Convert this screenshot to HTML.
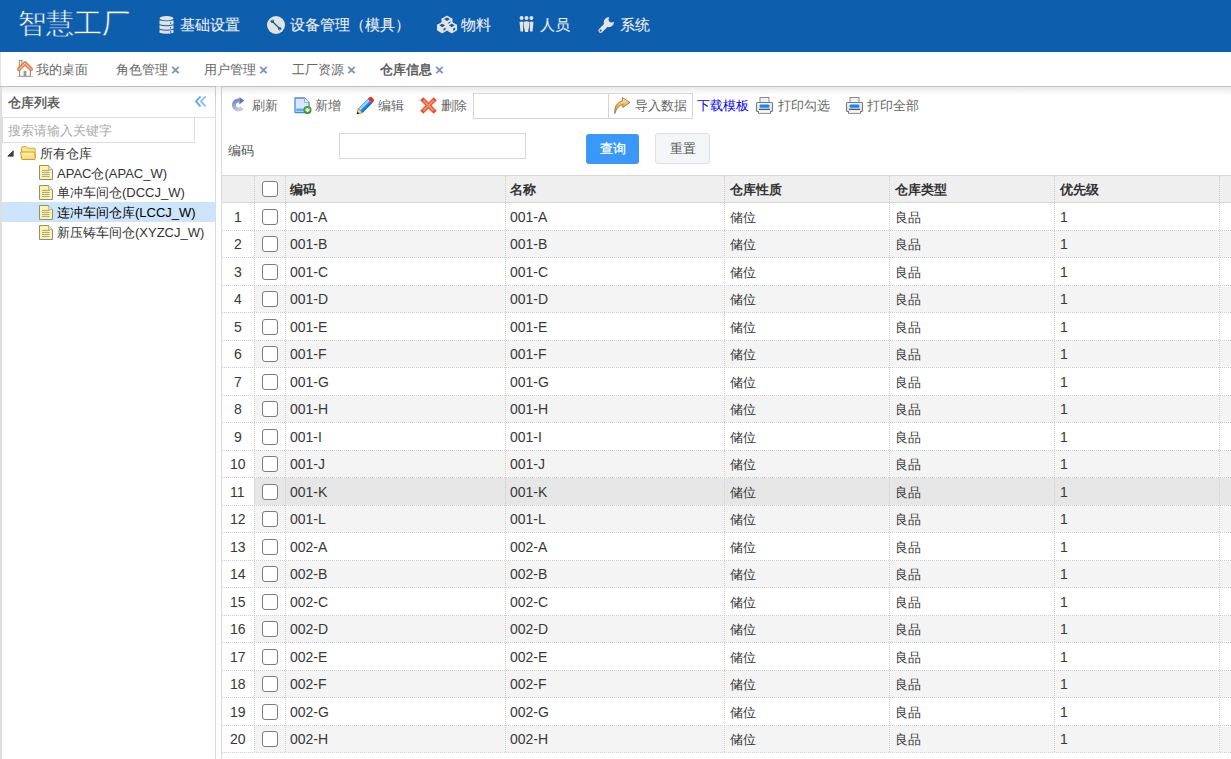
<!DOCTYPE html>
<html><head><meta charset="utf-8">
<style>
*{box-sizing:border-box;margin:0;padding:0}
html,body{width:1231px;height:759px;overflow:hidden;background:#fff}
body{font-family:"Liberation Sans",sans-serif;font-size:13px;color:#333;position:relative}
.abs{position:absolute}
svg.abs{overflow:visible}
.hdr{position:absolute;left:0;top:0;width:1231px;height:52px;background:#0e5eae}
.title{position:absolute;left:18px;top:4px;font-size:28px;color:#fff;white-space:nowrap;line-height:40px;-webkit-text-stroke:0.45px #0e5eae}
.mi{position:absolute;top:12px;height:26px;line-height:26px;font-size:15px;color:#f0eef0;white-space:nowrap;-webkit-text-stroke:0.1px #f0eef0}
.tab{position:absolute;top:61px;line-height:18px;font-size:13px;color:#666;white-space:nowrap}
.x{position:absolute;top:60.5px;line-height:18px;font-size:15px;font-weight:bold;color:#7791c4}
.cell{position:absolute;white-space:nowrap;line-height:18px}
.n{font-size:14px;color:#383838}
.cb{position:absolute;width:15.5px;height:15.5px;border:1.4px solid #7c7c7c;border-radius:3px;background:#fff}
</style></head><body>

<div class="hdr">
<div class="title">智慧工厂</div>
<div class="mi" style="left:180px">基础设置</div>
<div class="mi" style="left:290px">设备管理（模具）</div>
<div class="mi" style="left:461px">物料</div>
<div class="mi" style="left:540px">人员</div>
<div class="mi" style="left:620px">系统</div>
<svg class="abs" style="left:158.5px;top:16px" width="15" height="18" viewBox="0 0 15 18"><ellipse cx="7.5" cy="2.2" rx="7" ry="2.2" fill="#e6e3df"/><path d="M0.5,4.3 Q7.5,6.3 14.5,4.3 V8.3 Q7.5,10.3 0.5,8.3 Z" fill="#e6e3df"/><circle cx="11.6" cy="7.00" r="0.75" fill="#0e5eae"/><path d="M0.5,9.3 Q7.5,11.3 14.5,9.3 V12.8 Q7.5,14.8 0.5,12.8 Z" fill="#e6e3df"/><circle cx="11.6" cy="11.75" r="0.75" fill="#0e5eae"/><path d="M0.5,13.8 Q7.5,15.8 14.5,13.8 V16.8 Q7.5,18.8 0.5,16.8 Z" fill="#e6e3df"/><circle cx="11.6" cy="16.00" r="0.75" fill="#0e5eae"/></svg>
<svg class="abs" style="left:267px;top:16px" width="18" height="18" viewBox="0 0 18 18"><circle cx="9" cy="9" r="9" fill="#e6e3df"/><path d="M6,6 L12,12" stroke="#0e5eae" stroke-width="1.3" stroke-linecap="round"/><circle cx="5.3" cy="5.3" r="1.7" fill="#0e5eae"/><circle cx="12.7" cy="12.7" r="1.7" fill="#0e5eae"/><path d="M3.9,3.1 L5.3,4.6" stroke="#e6e3df" stroke-width="1"/><path d="M14.1,14.9 L12.7,13.4" stroke="#e6e3df" stroke-width="1"/></svg>
<svg class="abs" style="left:437px;top:16px" width="20" height="17" viewBox="0 0 20 17"><path d="M5.2,3.0 L10,5.640000000000001 L14.8,3.0 L14.8,8.04 L10,10.68 L5.2,8.04 Z" fill="#e6e3df" stroke="#e6e3df" stroke-width="1.3" stroke-linejoin="round"/><path d="M5.2,3.0 L10,0.3599999999999999 L14.8,3.0 L10,5.640000000000001 Z" fill="#e6e3df" stroke="#e6e3df" stroke-width="1.3" stroke-linejoin="round"/><path d="M7.024,3.1 L10,1.416 L12.975999999999999,3.1 L10,5.016 Z" fill="#0e5eae"/><path d="M11.44,6.4559999999999995 L13.456,5.304 L13.456,7.8 L11.44,9.0 Z" fill="#0e5eae"/><path d="M0.6000000000000005,9.2 L5.2,11.729999999999999 L9.8,9.2 L9.8,14.03 L5.2,16.56 L0.6000000000000005,14.03 Z" fill="#e6e3df" stroke="#e6e3df" stroke-width="1.3" stroke-linejoin="round"/><path d="M0.6000000000000005,9.2 L5.2,6.67 L9.8,9.2 L5.2,11.729999999999999 Z" fill="#e6e3df" stroke="#e6e3df" stroke-width="1.3" stroke-linejoin="round"/><path d="M2.3480000000000003,9.299999999999999 L5.2,7.6819999999999995 L8.052,9.299999999999999 L5.2,11.132 Z" fill="#0e5eae"/><path d="M6.58,12.511999999999999 L8.512,11.408 L8.512,13.799999999999999 L6.58,14.95 Z" fill="#0e5eae"/><path d="M10.200000000000001,9.2 L14.8,11.729999999999999 L19.4,9.2 L19.4,14.03 L14.8,16.56 L10.200000000000001,14.03 Z" fill="#e6e3df" stroke="#e6e3df" stroke-width="1.3" stroke-linejoin="round"/><path d="M10.200000000000001,9.2 L14.8,6.67 L19.4,9.2 L14.8,11.729999999999999 Z" fill="#e6e3df" stroke="#e6e3df" stroke-width="1.3" stroke-linejoin="round"/><path d="M11.948,9.299999999999999 L14.8,7.6819999999999995 L17.652,9.299999999999999 L14.8,11.132 Z" fill="#0e5eae"/><path d="M16.18,12.511999999999999 L18.112000000000002,11.408 L18.112000000000002,13.799999999999999 L16.18,14.95 Z" fill="#0e5eae"/></svg>
<svg class="abs" style="left:518.5px;top:16px" width="15" height="16" viewBox="0 0 15 16"><circle cx="2.6" cy="2" r="2" fill="#e6e3df"/><circle cx="7.5" cy="2" r="2" fill="#e6e3df"/><circle cx="12.4" cy="2" r="2" fill="#e6e3df"/><path d="M0.5,6 Q2.5,5 4.6,6 L4.2,11 L4,15.5 L1.5,15.5 L1,11 Z" fill="#e6e3df"/><path d="M10.4,6 Q12.5,5 14.5,6 L14,11 L13.5,15.5 L11,15.5 L10.8,11 Z" fill="#e6e3df"/><path d="M5,5.7 Q7.5,4.8 10,5.7 L10,11 L9,16 L6,16 L5,11 Z" fill="#e6e3df"/></svg>
<svg class="abs" style="left:597.5px;top:16px" width="17" height="18" viewBox="0 0 17 18"><path d="M2.6,14.6 L8.8,8.4" stroke="#e6e3df" stroke-width="4.4" stroke-linecap="round"/><circle cx="10.8" cy="6.3" r="5" fill="#e6e3df"/><circle cx="13.6" cy="3.4" r="3" fill="#0e5eae"/><path d="M12.6,2.4 L17,-2 L18,4.5 Z" fill="#0e5eae"/><circle cx="2.6" cy="14.6" r="1.1" fill="#0e5eae"/></svg>
</div>
<svg class="abs" style="left:17px;top:60px" width="16" height="17" viewBox="0 0 16 17"><rect x="2.3" y="0.5" width="2.6" height="6" fill="#fff" stroke="#8a8a8a" stroke-width="1"/><path d="M2.6,8 L2.6,16.2 L13.4,16.2 L13.4,8" fill="#fff" stroke="#8a8a8a" stroke-width="1.1"/><rect x="6.6" y="11" width="2.8" height="5.2" fill="#9a9a9a"/><path d="M0,16.6 H16" stroke="#aaa" stroke-width="0.8"/><path d="M2,9.2 L8,3.1 L14,9.2" fill="none" stroke="#e47d45" stroke-width="4" stroke-linejoin="round" stroke-linecap="round"/><path d="M2,9.2 L8,3.1 L14,9.2" fill="none" stroke="#f7b993" stroke-width="1.3" stroke-linejoin="round" stroke-linecap="round"/></svg>
<div class="tab" style="left:36px">我的桌面</div>
<div class="tab" style="left:116px">角色管理</div>
<div class="x" style="left:171px">×</div>
<div class="tab" style="left:204px">用户管理</div>
<div class="x" style="left:259px">×</div>
<div class="tab" style="left:292px">工厂资源</div>
<div class="x" style="left:347px">×</div>
<div class="tab" style="left:380px;color:#555;-webkit-text-stroke:0.45px #555">仓库信息</div>
<div class="x" style="left:435px">×</div>
<div class="abs" style="left:0;top:86px;width:216px;height:1px;background:#bfbfbf"></div>
<div class="abs" style="left:216px;top:86px;width:5px;height:1px;background:#dadada"></div>
<div class="abs" style="left:221px;top:86px;width:1010px;height:1px;background:#bfbfbf"></div>
<div class="abs" style="left:0;top:52px;width:1px;height:34px;background:#e2e2e2"></div>
<div class="abs" style="left:0;top:87px;width:2px;height:672px;background:#dedede"></div>
<div class="abs" style="left:2px;top:87px;width:213px;height:8px;background:linear-gradient(#ededed,#fff)"></div>
<div class="abs" style="left:215px;top:87px;width:1px;height:672px;background:linear-gradient(#c8c8c8,#dcdcdc 30px)"></div>
<div class="abs" style="left:216px;top:87px;width:5px;height:8px;background:linear-gradient(#f0f0f0,#fafafa)"></div>
<div class="abs" style="left:2px;top:117px;width:213px;height:1px;background:#e0e0e0"></div>
<div class="cell" style="left:8px;top:94px;color:#555;-webkit-text-stroke:0.4px #555">仓库列表</div>
<svg class="abs" style="left:194.5px;top:96px" width="11" height="11" viewBox="0 0 11 11"><path d="M5,1 L1,5.4 L5,9.8" fill="none" stroke="#55a6ec" stroke-width="1.8" stroke-linecap="round" stroke-linejoin="round"/><path d="M10,1 L6,5.4 L10,9.8" fill="none" stroke="#7cc0f4" stroke-width="1.8" stroke-linecap="round" stroke-linejoin="round"/></svg>
<div class="abs" style="left:2px;top:117px;width:193px;height:26px;border:1px solid #ddd;background:#fff"></div>
<div class="cell" style="left:8px;top:122px;color:#aaa">搜索请输入关键字</div>
<div class="abs" style="left:2px;top:202px;width:213px;height:20px;background:#cde5fb"></div>
<svg class="abs" style="left:6.5px;top:149.5px" width="7" height="7" viewBox="0 0 7 7"><path d="M0.8,6.2 L6.2,0.8 L6.2,6.2 Z" fill="#444" stroke="#333" stroke-width="0.8" stroke-linejoin="round"/></svg>
<svg class="abs" style="left:20px;top:146px" width="16" height="14" viewBox="0 0 16 14"><defs><linearGradient id="fg" x1="0" y1="0" x2="0" y2="1"><stop offset="0" stop-color="#fdf3a8"/><stop offset="1" stop-color="#f3d870"/></linearGradient></defs><path d="M1.5,12.5 V2.2 Q1.5,0.6 3.1,0.6 H6.3 L7.8,2.2 H14 Q15.2,2.2 15.2,3.4 V12.5 Z" fill="#f7e490" stroke="#d4a63c" stroke-width="1"/><path d="M0.6,6 H13.2 Q14.4,6 14.7,7 L15.4,12.6 Q15.5,13.5 14.5,13.5 H2.4 Q1.6,13.5 1.5,12.7 Z" fill="url(#fg)" stroke="#cf9a2a" stroke-width="1" stroke-linejoin="round"/></svg>
<div class="cell" style="left:40px;top:145px;color:#333">所有仓库</div>
<div class="cell" style="left:57px;top:164.5px;color:#333">APAC仓(APAC_W)</div>
<svg class="abs" style="left:39px;top:165px" width="14" height="15" viewBox="0 0 14 15"><path d="M0.5,0.5 L9.5,0.5 L13.5,4.5 L13.5,14.5 L0.5,14.5 Z" fill="#fcf6a2" stroke="#8c8c8c" stroke-width="1"/><path d="M9.5,0.5 L9.5,4.5 L13.5,4.5" fill="#f0e8c8" stroke="#aaa" stroke-width="0.8"/><path d="M3,5.5 H10.5" stroke="#9a9a8a" stroke-width="0.9"/><path d="M3,7.5 H10.5" stroke="#9a9a8a" stroke-width="0.9"/><path d="M3,9.5 H10.5" stroke="#9a9a8a" stroke-width="0.9"/><path d="M3,11.5 H10.5" stroke="#9a9a8a" stroke-width="0.9"/><path d="M5.5,4 V12.5 M8,4 V12.5" stroke="#d8d0a0" stroke-width="0.6"/></svg>
<div class="cell" style="left:57px;top:184px;color:#333">单冲车间仓(DCCJ_W)</div>
<svg class="abs" style="left:39px;top:185px" width="14" height="15" viewBox="0 0 14 15"><path d="M0.5,0.5 L9.5,0.5 L13.5,4.5 L13.5,14.5 L0.5,14.5 Z" fill="#fcf6a2" stroke="#8c8c8c" stroke-width="1"/><path d="M9.5,0.5 L9.5,4.5 L13.5,4.5" fill="#f0e8c8" stroke="#aaa" stroke-width="0.8"/><path d="M3,5.5 H10.5" stroke="#9a9a8a" stroke-width="0.9"/><path d="M3,7.5 H10.5" stroke="#9a9a8a" stroke-width="0.9"/><path d="M3,9.5 H10.5" stroke="#9a9a8a" stroke-width="0.9"/><path d="M3,11.5 H10.5" stroke="#9a9a8a" stroke-width="0.9"/><path d="M5.5,4 V12.5 M8,4 V12.5" stroke="#d8d0a0" stroke-width="0.6"/></svg>
<div class="cell" style="left:57px;top:204px;color:#000">连冲车间仓库(LCCJ_W)</div>
<svg class="abs" style="left:39px;top:205px" width="14" height="15" viewBox="0 0 14 15"><path d="M0.5,0.5 L9.5,0.5 L13.5,4.5 L13.5,14.5 L0.5,14.5 Z" fill="#fcf6a2" stroke="#8c8c8c" stroke-width="1"/><path d="M9.5,0.5 L9.5,4.5 L13.5,4.5" fill="#f0e8c8" stroke="#aaa" stroke-width="0.8"/><path d="M3,5.5 H10.5" stroke="#9a9a8a" stroke-width="0.9"/><path d="M3,7.5 H10.5" stroke="#9a9a8a" stroke-width="0.9"/><path d="M3,9.5 H10.5" stroke="#9a9a8a" stroke-width="0.9"/><path d="M3,11.5 H10.5" stroke="#9a9a8a" stroke-width="0.9"/><path d="M5.5,4 V12.5 M8,4 V12.5" stroke="#d8d0a0" stroke-width="0.6"/></svg>
<div class="cell" style="left:57px;top:224px;color:#333">新压铸车间仓(XYZCJ_W)</div>
<svg class="abs" style="left:39px;top:225px" width="14" height="15" viewBox="0 0 14 15"><path d="M0.5,0.5 L9.5,0.5 L13.5,4.5 L13.5,14.5 L0.5,14.5 Z" fill="#fcf6a2" stroke="#8c8c8c" stroke-width="1"/><path d="M9.5,0.5 L9.5,4.5 L13.5,4.5" fill="#f0e8c8" stroke="#aaa" stroke-width="0.8"/><path d="M3,5.5 H10.5" stroke="#9a9a8a" stroke-width="0.9"/><path d="M3,7.5 H10.5" stroke="#9a9a8a" stroke-width="0.9"/><path d="M3,9.5 H10.5" stroke="#9a9a8a" stroke-width="0.9"/><path d="M3,11.5 H10.5" stroke="#9a9a8a" stroke-width="0.9"/><path d="M5.5,4 V12.5 M8,4 V12.5" stroke="#d8d0a0" stroke-width="0.6"/></svg>
<div class="abs" style="left:221px;top:87px;width:1px;height:672px;background:linear-gradient(#c8c8c8,#dcdcdc 30px)"></div>
<div class="abs" style="left:222px;top:87px;width:1009px;height:8px;background:linear-gradient(#e9e9e9,#fff)"></div>
<svg class="abs" style="left:232px;top:97px" width="13" height="15" viewBox="0 0 13 15"><defs><linearGradient id="rg" x1="0" y1="0" x2="0.4" y2="1"><stop offset="0" stop-color="#5270c2"/><stop offset="0.5" stop-color="#93a6d8"/><stop offset="1" stop-color="#c9ccd3"/></linearGradient></defs><path d="M7.63,1.6 A6.5,6.5 0 1 0 11.48,12.18 L8.49,9.67 A2.6,2.6 0 1 1 6.95,5.44 Z" fill="url(#rg)"/><path d="M7.4,0.2 L12.4,3.6 L7.3,7.4 Z" fill="#5574c6"/></svg>
<svg class="abs" style="left:294px;top:97px" width="18" height="17" viewBox="0 0 18 17"><path d="M1,1 L10.5,1 L15,5.5 L15,15.5 L1,15.5 Z" fill="#d9e8fb" stroke="#4d8ad6" stroke-width="1.3" stroke-linejoin="round"/><path d="M10.5,1 L10.5,5.5 L15,5.5" fill="#f4f8fe" stroke="#7aa6e0" stroke-width="0.8"/><rect x="2.3" y="11.5" width="10" height="2.6" fill="#58b4f6"/><circle cx="13.5" cy="13" r="4" fill="#3f8f2a"/><circle cx="13.5" cy="12.6" r="2.9" fill="#6cb04a"/><path d="M11.5,13 H15.5 M13.5,11 V15" stroke="#fff" stroke-width="1.5"/></svg>
<svg class="abs" style="left:356px;top:96.5px" width="19" height="18" viewBox="0 0 19 18"><g transform="translate(9.3 8.7) rotate(-45)"><rect x="-7" y="-3" width="13.5" height="6" fill="#1b8df2"/><rect x="-7" y="-2.4" width="13.5" height="2.1" fill="#a8dafc"/><rect x="-7" y="1.5" width="13.5" height="1.5" fill="#156ed2"/><path d="M6.5,-3 L8.5,-3 Q10.5,-3 10.5,-1 L10.5,1 Q10.5,3 8.5,3 L6.5,3 Z" fill="#e4321b"/><path d="M-7,-3 L-11.5,0 L-7,3 Z" fill="#f5dca6" stroke="#a8781e" stroke-width="0.8" stroke-linejoin="round"/><path d="M-9.8,-1.3 L-12,0 L-9.8,1.3 Z" fill="#0d0d1a"/></g></svg>
<svg class="abs" style="left:421px;top:98px" width="15" height="15" viewBox="0 0 15 15"><path d="M2.3,2.3 L12.7,12.7 M12.7,2.3 L2.3,12.7" stroke="#e9502f" stroke-width="4.4" stroke-linecap="square"/><path d="M2.3,2.3 L12.7,12.7 M12.7,2.3 L2.3,12.7" stroke="#f6896a" stroke-width="2"/></svg>
<svg class="abs" style="left:614px;top:97px" width="17" height="17" viewBox="0 0 17 17"><defs><linearGradient id="ag" x1="0" y1="0" x2="0" y2="1"><stop offset="0" stop-color="#fde9b8"/><stop offset="0.6" stop-color="#f9a81c"/><stop offset="1" stop-color="#f0b530"/></linearGradient></defs><path d="M0.8,16.5 C0.2,10 3,5.3 8.3,3.8 L8.5,0.6 L16,5.5 L8.8,10.4 L8.7,7.5 C5.5,8.2 2.8,11 0.8,16.5 Z" fill="url(#ag)" stroke="#7d6a56" stroke-width="0.8" stroke-linejoin="round"/></svg>
<svg class="abs" style="left:756px;top:97px" width="17" height="17" viewBox="0 0 17 17"><defs><linearGradient id="pg" x1="0" y1="0" x2="0" y2="1"><stop offset="0" stop-color="#f4f4f6"/><stop offset="1" stop-color="#d6d8de"/></linearGradient></defs><rect x="4" y="0.5" width="9" height="7" fill="#eef2f8" stroke="#8a8a8a" stroke-width="1"/><path d="M1.5,5.5 H15.5 Q16.5,5.5 16.5,6.5 V13.5 Q16.5,14.5 15.5,14.5 H14.5 V16.3 H2.5 V14.5 H1.5 Q0.5,14.5 0.5,13.5 V6.5 Q0.5,5.5 1.5,5.5 Z" fill="url(#pg)" stroke="#7a7a7a" stroke-width="1.1" stroke-linejoin="round"/><rect x="3.6" y="7.6" width="9.8" height="3.2" rx="1.2" fill="#1287fb"/><path d="M3,12.4 H14" stroke="#555" stroke-width="1.3"/><rect x="3" y="13.2" width="11" height="2.6" fill="#f6f6f8"/></svg>
<svg class="abs" style="left:846px;top:97px" width="17" height="17" viewBox="0 0 17 17"><defs><linearGradient id="pg" x1="0" y1="0" x2="0" y2="1"><stop offset="0" stop-color="#f4f4f6"/><stop offset="1" stop-color="#d6d8de"/></linearGradient></defs><rect x="4" y="0.5" width="9" height="7" fill="#eef2f8" stroke="#8a8a8a" stroke-width="1"/><path d="M1.5,5.5 H15.5 Q16.5,5.5 16.5,6.5 V13.5 Q16.5,14.5 15.5,14.5 H14.5 V16.3 H2.5 V14.5 H1.5 Q0.5,14.5 0.5,13.5 V6.5 Q0.5,5.5 1.5,5.5 Z" fill="url(#pg)" stroke="#7a7a7a" stroke-width="1.1" stroke-linejoin="round"/><rect x="3.6" y="7.6" width="9.8" height="3.2" rx="1.2" fill="#1287fb"/><path d="M3,12.4 H14" stroke="#555" stroke-width="1.3"/><rect x="3" y="13.2" width="11" height="2.6" fill="#f6f6f8"/></svg>
<div class="cell" style="left:252px;top:97px;color:#666">刷新</div>
<div class="cell" style="left:315px;top:97px;color:#666">新增</div>
<div class="cell" style="left:378px;top:97px;color:#666">编辑</div>
<div class="cell" style="left:441px;top:97px;color:#666">删除</div>
<div class="cell" style="left:635px;top:97px;color:#666">导入数据</div>
<div class="cell" style="left:778px;top:97px;color:#666">打印勾选</div>
<div class="cell" style="left:867px;top:97px;color:#666">打印全部</div>
<div class="cell" style="left:697px;top:97px;color:#0000ee">下载模板</div>
<div class="abs" style="left:473px;top:93px;width:220px;height:26px;border:1px solid #d5d5d5"></div>
<div class="abs" style="left:608px;top:93px;width:1px;height:26px;background:#d5d5d5"></div>
<div class="cell" style="left:228px;top:142px;color:#555">编码</div>
<div class="abs" style="left:339px;top:133px;width:187px;height:26px;border:1px solid #d8d8d8"></div>
<div class="abs" style="left:586px;top:134px;width:53px;height:30px;background:#3a98f9;border-radius:3px;color:#fff;text-align:center;line-height:30px;-webkit-text-stroke:0.3px #fff">查询</div>
<div class="abs" style="left:655px;top:133px;width:55px;height:31px;background:#f4f5f7;border:1px solid #dcdfe6;border-radius:3px;color:#555;text-align:center;line-height:29px">重置</div>
<div class="abs" style="left:222px;top:175px;width:1009px;height:28px;background:#efefef;border-top:1px solid #d6d6d6;border-bottom:1px solid #d6d6d6"></div>
<div class="cell" style="left:290px;top:181px;font-weight:bold;color:#333">编码</div>
<div class="cell" style="left:510px;top:181px;font-weight:bold;color:#333">名称</div>
<div class="cell" style="left:730px;top:181px;font-weight:bold;color:#333">仓库性质</div>
<div class="cell" style="left:895px;top:181px;font-weight:bold;color:#333">仓库类型</div>
<div class="cell" style="left:1060px;top:181px;font-weight:bold;color:#333">优先级</div>
<div class="cb" style="left:262px;top:181px"></div>
<div class="abs" style="left:254px;top:203px;width:977px;height:27px;background:#fff"></div>
<div class="abs" style="left:222px;top:230px;width:1009px;height:1px;border-top:1px dotted #cdcdcd"></div>
<div class="cell n" style="left:234px;top:207.5px">1</div>
<div class="cb" style="left:262px;top:209px"></div>
<div class="cell n" style="left:290px;top:207.5px">001-A</div>
<div class="cell n" style="left:510px;top:207.5px">001-A</div>
<div class="cell" style="left:730px;top:208.5px">储位</div>
<div class="cell" style="left:895px;top:208.5px">良品</div>
<div class="cell n" style="left:1060px;top:207.5px">1</div>
<div class="abs" style="left:254px;top:231px;width:977px;height:26px;background:#f4f4f4"></div>
<div class="abs" style="left:222px;top:257px;width:1009px;height:1px;border-top:1px dotted #cdcdcd"></div>
<div class="cell n" style="left:234px;top:235.0px">2</div>
<div class="cb" style="left:262px;top:236px"></div>
<div class="cell n" style="left:290px;top:235.0px">001-B</div>
<div class="cell n" style="left:510px;top:235.0px">001-B</div>
<div class="cell" style="left:730px;top:236.0px">储位</div>
<div class="cell" style="left:895px;top:236.0px">良品</div>
<div class="cell n" style="left:1060px;top:235.0px">1</div>
<div class="abs" style="left:254px;top:258px;width:977px;height:27px;background:#fff"></div>
<div class="abs" style="left:222px;top:285px;width:1009px;height:1px;border-top:1px dotted #cdcdcd"></div>
<div class="cell n" style="left:234px;top:262.5px">3</div>
<div class="cb" style="left:262px;top:264px"></div>
<div class="cell n" style="left:290px;top:262.5px">001-C</div>
<div class="cell n" style="left:510px;top:262.5px">001-C</div>
<div class="cell" style="left:730px;top:263.5px">储位</div>
<div class="cell" style="left:895px;top:263.5px">良品</div>
<div class="cell n" style="left:1060px;top:262.5px">1</div>
<div class="abs" style="left:254px;top:286px;width:977px;height:26px;background:#f4f4f4"></div>
<div class="abs" style="left:222px;top:312px;width:1009px;height:1px;border-top:1px dotted #cdcdcd"></div>
<div class="cell n" style="left:234px;top:290.0px">4</div>
<div class="cb" style="left:262px;top:291px"></div>
<div class="cell n" style="left:290px;top:290.0px">001-D</div>
<div class="cell n" style="left:510px;top:290.0px">001-D</div>
<div class="cell" style="left:730px;top:291.0px">储位</div>
<div class="cell" style="left:895px;top:291.0px">良品</div>
<div class="cell n" style="left:1060px;top:290.0px">1</div>
<div class="abs" style="left:254px;top:313px;width:977px;height:27px;background:#fff"></div>
<div class="abs" style="left:222px;top:340px;width:1009px;height:1px;border-top:1px dotted #cdcdcd"></div>
<div class="cell n" style="left:234px;top:317.5px">5</div>
<div class="cb" style="left:262px;top:319px"></div>
<div class="cell n" style="left:290px;top:317.5px">001-E</div>
<div class="cell n" style="left:510px;top:317.5px">001-E</div>
<div class="cell" style="left:730px;top:318.5px">储位</div>
<div class="cell" style="left:895px;top:318.5px">良品</div>
<div class="cell n" style="left:1060px;top:317.5px">1</div>
<div class="abs" style="left:254px;top:341px;width:977px;height:26px;background:#f4f4f4"></div>
<div class="abs" style="left:222px;top:367px;width:1009px;height:1px;border-top:1px dotted #cdcdcd"></div>
<div class="cell n" style="left:234px;top:345.0px">6</div>
<div class="cb" style="left:262px;top:346px"></div>
<div class="cell n" style="left:290px;top:345.0px">001-F</div>
<div class="cell n" style="left:510px;top:345.0px">001-F</div>
<div class="cell" style="left:730px;top:346.0px">储位</div>
<div class="cell" style="left:895px;top:346.0px">良品</div>
<div class="cell n" style="left:1060px;top:345.0px">1</div>
<div class="abs" style="left:254px;top:368px;width:977px;height:27px;background:#fff"></div>
<div class="abs" style="left:222px;top:395px;width:1009px;height:1px;border-top:1px dotted #cdcdcd"></div>
<div class="cell n" style="left:234px;top:372.5px">7</div>
<div class="cb" style="left:262px;top:374px"></div>
<div class="cell n" style="left:290px;top:372.5px">001-G</div>
<div class="cell n" style="left:510px;top:372.5px">001-G</div>
<div class="cell" style="left:730px;top:373.5px">储位</div>
<div class="cell" style="left:895px;top:373.5px">良品</div>
<div class="cell n" style="left:1060px;top:372.5px">1</div>
<div class="abs" style="left:254px;top:396px;width:977px;height:26px;background:#f4f4f4"></div>
<div class="abs" style="left:222px;top:422px;width:1009px;height:1px;border-top:1px dotted #cdcdcd"></div>
<div class="cell n" style="left:234px;top:400.0px">8</div>
<div class="cb" style="left:262px;top:401px"></div>
<div class="cell n" style="left:290px;top:400.0px">001-H</div>
<div class="cell n" style="left:510px;top:400.0px">001-H</div>
<div class="cell" style="left:730px;top:401.0px">储位</div>
<div class="cell" style="left:895px;top:401.0px">良品</div>
<div class="cell n" style="left:1060px;top:400.0px">1</div>
<div class="abs" style="left:254px;top:423px;width:977px;height:27px;background:#fff"></div>
<div class="abs" style="left:222px;top:450px;width:1009px;height:1px;border-top:1px dotted #cdcdcd"></div>
<div class="cell n" style="left:234px;top:427.5px">9</div>
<div class="cb" style="left:262px;top:429px"></div>
<div class="cell n" style="left:290px;top:427.5px">001-I</div>
<div class="cell n" style="left:510px;top:427.5px">001-I</div>
<div class="cell" style="left:730px;top:428.5px">储位</div>
<div class="cell" style="left:895px;top:428.5px">良品</div>
<div class="cell n" style="left:1060px;top:427.5px">1</div>
<div class="abs" style="left:254px;top:451px;width:977px;height:26px;background:#f4f4f4"></div>
<div class="abs" style="left:222px;top:477px;width:1009px;height:1px;border-top:1px dotted #cdcdcd"></div>
<div class="cell n" style="left:230px;top:455.0px">10</div>
<div class="cb" style="left:262px;top:456px"></div>
<div class="cell n" style="left:290px;top:455.0px">001-J</div>
<div class="cell n" style="left:510px;top:455.0px">001-J</div>
<div class="cell" style="left:730px;top:456.0px">储位</div>
<div class="cell" style="left:895px;top:456.0px">良品</div>
<div class="cell n" style="left:1060px;top:455.0px">1</div>
<div class="abs" style="left:254px;top:478px;width:977px;height:27px;background:#e6e6e6"></div>
<div class="abs" style="left:222px;top:505px;width:1009px;height:1px;border-top:1px dotted #cdcdcd"></div>
<div class="cell n" style="left:230px;top:482.5px">11</div>
<div class="cb" style="left:262px;top:484px"></div>
<div class="cell n" style="left:290px;top:482.5px">001-K</div>
<div class="cell n" style="left:510px;top:482.5px">001-K</div>
<div class="cell" style="left:730px;top:483.5px">储位</div>
<div class="cell" style="left:895px;top:483.5px">良品</div>
<div class="cell n" style="left:1060px;top:482.5px">1</div>
<div class="abs" style="left:254px;top:506px;width:977px;height:26px;background:#f4f4f4"></div>
<div class="abs" style="left:222px;top:532px;width:1009px;height:1px;border-top:1px dotted #cdcdcd"></div>
<div class="cell n" style="left:230px;top:510.0px">12</div>
<div class="cb" style="left:262px;top:511px"></div>
<div class="cell n" style="left:290px;top:510.0px">001-L</div>
<div class="cell n" style="left:510px;top:510.0px">001-L</div>
<div class="cell" style="left:730px;top:511.0px">储位</div>
<div class="cell" style="left:895px;top:511.0px">良品</div>
<div class="cell n" style="left:1060px;top:510.0px">1</div>
<div class="abs" style="left:254px;top:533px;width:977px;height:27px;background:#fff"></div>
<div class="abs" style="left:222px;top:560px;width:1009px;height:1px;border-top:1px dotted #cdcdcd"></div>
<div class="cell n" style="left:230px;top:537.5px">13</div>
<div class="cb" style="left:262px;top:539px"></div>
<div class="cell n" style="left:290px;top:537.5px">002-A</div>
<div class="cell n" style="left:510px;top:537.5px">002-A</div>
<div class="cell" style="left:730px;top:538.5px">储位</div>
<div class="cell" style="left:895px;top:538.5px">良品</div>
<div class="cell n" style="left:1060px;top:537.5px">1</div>
<div class="abs" style="left:254px;top:561px;width:977px;height:26px;background:#f4f4f4"></div>
<div class="abs" style="left:222px;top:587px;width:1009px;height:1px;border-top:1px dotted #cdcdcd"></div>
<div class="cell n" style="left:230px;top:565.0px">14</div>
<div class="cb" style="left:262px;top:566px"></div>
<div class="cell n" style="left:290px;top:565.0px">002-B</div>
<div class="cell n" style="left:510px;top:565.0px">002-B</div>
<div class="cell" style="left:730px;top:566.0px">储位</div>
<div class="cell" style="left:895px;top:566.0px">良品</div>
<div class="cell n" style="left:1060px;top:565.0px">1</div>
<div class="abs" style="left:254px;top:588px;width:977px;height:27px;background:#fff"></div>
<div class="abs" style="left:222px;top:615px;width:1009px;height:1px;border-top:1px dotted #cdcdcd"></div>
<div class="cell n" style="left:230px;top:592.5px">15</div>
<div class="cb" style="left:262px;top:594px"></div>
<div class="cell n" style="left:290px;top:592.5px">002-C</div>
<div class="cell n" style="left:510px;top:592.5px">002-C</div>
<div class="cell" style="left:730px;top:593.5px">储位</div>
<div class="cell" style="left:895px;top:593.5px">良品</div>
<div class="cell n" style="left:1060px;top:592.5px">1</div>
<div class="abs" style="left:254px;top:616px;width:977px;height:26px;background:#f4f4f4"></div>
<div class="abs" style="left:222px;top:642px;width:1009px;height:1px;border-top:1px dotted #cdcdcd"></div>
<div class="cell n" style="left:230px;top:620.0px">16</div>
<div class="cb" style="left:262px;top:621px"></div>
<div class="cell n" style="left:290px;top:620.0px">002-D</div>
<div class="cell n" style="left:510px;top:620.0px">002-D</div>
<div class="cell" style="left:730px;top:621.0px">储位</div>
<div class="cell" style="left:895px;top:621.0px">良品</div>
<div class="cell n" style="left:1060px;top:620.0px">1</div>
<div class="abs" style="left:254px;top:643px;width:977px;height:27px;background:#fff"></div>
<div class="abs" style="left:222px;top:670px;width:1009px;height:1px;border-top:1px dotted #cdcdcd"></div>
<div class="cell n" style="left:230px;top:647.5px">17</div>
<div class="cb" style="left:262px;top:649px"></div>
<div class="cell n" style="left:290px;top:647.5px">002-E</div>
<div class="cell n" style="left:510px;top:647.5px">002-E</div>
<div class="cell" style="left:730px;top:648.5px">储位</div>
<div class="cell" style="left:895px;top:648.5px">良品</div>
<div class="cell n" style="left:1060px;top:647.5px">1</div>
<div class="abs" style="left:254px;top:671px;width:977px;height:26px;background:#f4f4f4"></div>
<div class="abs" style="left:222px;top:697px;width:1009px;height:1px;border-top:1px dotted #cdcdcd"></div>
<div class="cell n" style="left:230px;top:675.0px">18</div>
<div class="cb" style="left:262px;top:676px"></div>
<div class="cell n" style="left:290px;top:675.0px">002-F</div>
<div class="cell n" style="left:510px;top:675.0px">002-F</div>
<div class="cell" style="left:730px;top:676.0px">储位</div>
<div class="cell" style="left:895px;top:676.0px">良品</div>
<div class="cell n" style="left:1060px;top:675.0px">1</div>
<div class="abs" style="left:254px;top:698px;width:977px;height:27px;background:#fff"></div>
<div class="abs" style="left:222px;top:725px;width:1009px;height:1px;border-top:1px dotted #cdcdcd"></div>
<div class="cell n" style="left:230px;top:702.5px">19</div>
<div class="cb" style="left:262px;top:704px"></div>
<div class="cell n" style="left:290px;top:702.5px">002-G</div>
<div class="cell n" style="left:510px;top:702.5px">002-G</div>
<div class="cell" style="left:730px;top:703.5px">储位</div>
<div class="cell" style="left:895px;top:703.5px">良品</div>
<div class="cell n" style="left:1060px;top:702.5px">1</div>
<div class="abs" style="left:254px;top:726px;width:977px;height:26px;background:#f4f4f4"></div>
<div class="abs" style="left:222px;top:752px;width:1009px;height:1px;border-top:1px dotted #cdcdcd"></div>
<div class="cell n" style="left:230px;top:730.0px">20</div>
<div class="cb" style="left:262px;top:731px"></div>
<div class="cell n" style="left:290px;top:730.0px">002-H</div>
<div class="cell n" style="left:510px;top:730.0px">002-H</div>
<div class="cell" style="left:730px;top:731.0px">储位</div>
<div class="cell" style="left:895px;top:731.0px">良品</div>
<div class="cell n" style="left:1060px;top:730.0px">1</div>
<div class="abs" style="left:254px;top:176px;width:1px;height:576px;border-left:1px dotted #cdcdcd"></div>
<div class="abs" style="left:285px;top:176px;width:1px;height:576px;border-left:1px dotted #cdcdcd"></div>
<div class="abs" style="left:505px;top:176px;width:1px;height:576px;border-left:1px dotted #cdcdcd"></div>
<div class="abs" style="left:724px;top:176px;width:1px;height:576px;border-left:1px dotted #cdcdcd"></div>
<div class="abs" style="left:889px;top:176px;width:1px;height:576px;border-left:1px dotted #cdcdcd"></div>
<div class="abs" style="left:1054px;top:176px;width:1px;height:576px;border-left:1px dotted #cdcdcd"></div>
<div class="abs" style="left:1219px;top:176px;width:1px;height:576px;border-left:1px dotted #cdcdcd"></div>
</body></html>
